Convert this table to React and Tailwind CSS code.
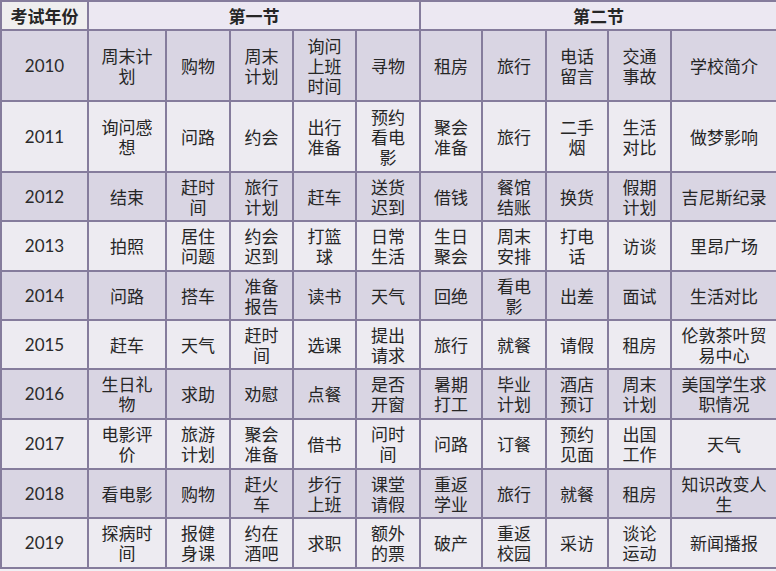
import React from 'react'

const widths = [87, 78, 64, 63, 63, 64, 62, 64, 62, 63, 106]

const rows = [
  ['2010', 71, ['周末计划', '购物', '周末计划', '询问上班时间', '寻物', '租房', '旅行', '电话留言', '交通事故', '学校简介']],
  ['2011', 71, ['询问感想', '问路', '约会', '出行准备', '预约看电影', '聚会准备', '旅行', '二手烟', '生活对比', '做梦影响']],
  ['2012', 49, ['结束', '赶时间', '旅行计划', '赶车', '送货迟到', '借钱', '餐馆结账', '换货', '假期计划', '吉尼斯纪录']],
  ['2013', 50, ['拍照', '居住问题', '约会迟到', '打篮球', '日常生活', '生日聚会', '周末安排', '打电话', '访谈', '里昂广场']],
  ['2014', 49, ['问路', '搭车', '准备报告', '读书', '天气', '回绝', '看电影', '出差', '面试', '生活对比']],
  ['2015', 49, ['赶车', '天气', '赶时间', '选课', '提出请求', '旅行', '就餐', '请假', '租房', '伦敦茶叶贸易中心']],
  ['2016', 50, ['生日礼物', '求助', '劝慰', '点餐', '是否开窗', '暑期打工', '毕业计划', '酒店预订', '周末计划', '美国学生求职情况']],
  ['2017', 50, ['电影评价', '旅游计划', '聚会准备', '借书', '问时间', '问路', '订餐', '预约见面', '出国工作', '天气']],
  ['2018', 49, ['看电影', '购物', '赶火车', '步行上班', '课堂请假', '重返学业', '旅行', '就餐', '租房', '知识改变人生']],
  ['2019', 50, ['探病时间', '报健身课', '约在酒吧', '求职', '额外的票', '破产', '重返校园', '采访', '谈论运动', '新闻播报']],
]

const cjk = { fontFamily: '"Noto Sans CJK SC", "Noto Sans", sans-serif' }

export default function App() {
  return (
    <div className="w-[776px] h-[571px] overflow-hidden bg-[#f1eff4]">
      <table className="table-fixed border-collapse w-[776px] text-[#262626]" style={cjk}>
        <colgroup>
          {widths.map((w, i) => (
            <col key={i} style={{ width: w }} />
          ))}
        </colgroup>
        <thead>
          <tr className="h-[29px]">
            <th className="border-2 border-[#857c9c] bg-[#efeeef] text-[17px] leading-[20px] font-bold p-0">考试年份</th>
            <th colSpan={5} className="border-2 border-[#857c9c] bg-[#ece8f2] text-[17px] leading-[20px] font-bold p-0">第一节</th>
            <th colSpan={5} className="border-2 border-[#857c9c] bg-[#ece8f2] text-[17px] leading-[20px] font-bold p-0">第二节</th>
          </tr>
        </thead>
        <tbody>
          {rows.map(([year, h, cells], r) => (
            <tr
              key={year}
              style={{ height: h }}
              className={r % 2 === 0 ? 'bg-[#d9d5e3]' : 'bg-[#edebf1]'}
            >
              <td className="border-2 border-[#857c9c] text-center text-[17px] p-0 font-['Lato',sans-serif] text-[#2a2a2a]">
                {year}
              </td>
              {cells.map((c, i) => (
                <td
                  key={i}
                  className="border-2 border-[#857c9c] text-center align-middle text-[17px] leading-[20px] px-2 py-0 break-all"
                >
                  {c}
                </td>
              ))}
            </tr>
          ))}
        </tbody>
      </table>
    </div>
  )
}
